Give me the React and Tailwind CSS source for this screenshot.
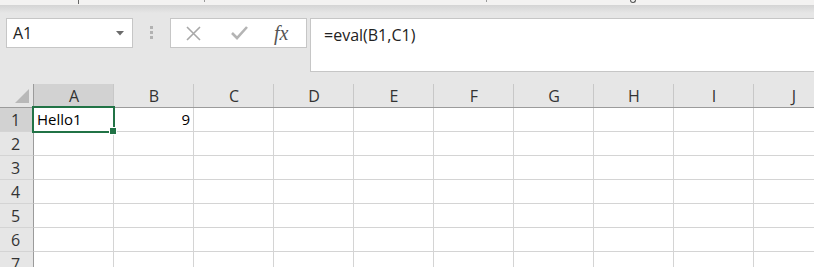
import React from "react";

const cols = ["A", "B", "C", "D", "E", "F", "G", "H", "I", "J"];
const rows = [1, 2, 3, 4, 5, 6, 7];

function Cell({ r, c }) {
  const isA1 = r === 1 && c === "A";
  return (
    <div className="relative h-[24px] border-b border-r border-[#d4d4d4] bg-white">
      {isA1 && (
        <>
          <div className="absolute left-[3px] top-0 h-[23px] flex items-center text-[15px] text-black">Hello1</div>
          <div className="absolute -left-[2px] -top-[2px] w-[83px] h-[27px] border-2 border-[#217346] z-10">
            <div className="absolute -right-[4px] -bottom-[4px] w-[6px] h-[6px] bg-[#217346] border border-white box-content"></div>
          </div>
        </>
      )}
      {r === 1 && c === "B" && (
        <div className="absolute right-[3px] top-0 h-[23px] flex items-center text-[15px] text-black">9</div>
      )}
    </div>
  );
}

export default function App() {
  return (
    <div className="w-[814px] h-[267px] overflow-hidden bg-[#e6e6e6] relative font-['Open_Sans',sans-serif]">
      {/* top strip */}
      <div className="relative h-[5px] bg-[#f3f2f1]">
        <div className="absolute left-[78px] top-0 w-px h-[4px] bg-[#666]"></div>
        <div className="absolute left-[204px] top-0 w-px h-[2px] bg-[#999]"></div>
        <div className="absolute left-[486px] top-0 w-px h-[2px] bg-[#999]"></div>
        <div className="absolute left-[630px] top-0 w-[6px] h-[3px] border-b border-r border-l border-[#555] rounded-b-[3px]"></div>
      </div>
      <div className="h-[8px] bg-gradient-to-b from-[#d4d4d4] to-[#e6e6e6]"></div>

      {/* toolbar */}
      <div className="mt-[5px] flex items-start h-[54px]">
        <div className="ml-[6px] w-[127px] h-[30px] border border-[#c6c6c6] bg-white flex items-center justify-between pl-[6px] pr-[8px]">
          <span className="text-[16px] text-[#222]">A1</span>
          <svg width="8" height="5" viewBox="0 0 8 5"><path d="M0 0 H8 L4 4.5 Z" fill="#6b6b6b" /></svg>
        </div>
        <div className="ml-[17px] mt-[8px] flex flex-col gap-[2px]">
          <div className="w-[3px] h-[3px] bg-[#b2b2b2]"></div>
          <div className="w-[3px] h-[3px] bg-[#b2b2b2]"></div>
          <div className="w-[3px] h-[3px] bg-[#b2b2b2]"></div>
        </div>
        <div className="ml-[17px] w-[137px] h-[30px] border border-[#c6c6c6] bg-white flex items-center">
          <svg className="ml-[15px]" width="15" height="15" viewBox="0 0 15 15">
            <path d="M1 1 L14 14 M14 1 L1 14" stroke="#a8a8a8" strokeWidth="1.6" fill="none" />
          </svg>
          <svg className="ml-[30px]" width="17" height="14" viewBox="0 0 17 14">
            <path d="M1 7 L6 12 L16 1" stroke="#b4b4b4" strokeWidth="2.6" fill="none" />
          </svg>
          <span className="ml-[26px] font-['Liberation_Serif',serif] italic text-[20px] text-[#555] leading-none">fx</span>
        </div>
        <div className="ml-[3px] flex-1 h-[54px] border border-r-0 border-[#c6c6c6] bg-white pl-[13px] pt-[4px]">
          <span className="text-[16px] text-[#222]">=eval(B1,C1)</span>
        </div>
      </div>

      {/* grid */}
      <div className="mt-[12px] grid grid-cols-[34px_repeat(10,80px)]">
        {/* header row */}
        <div className="relative h-[24px] border-b border-r border-[#9b9b9b]">
          <svg className="absolute left-[15px] top-[5px]" width="14" height="14" viewBox="0 0 14 14">
            <path d="M14 0 V14 H0 Z" fill="#b8b8b8" />
          </svg>
        </div>
        {cols.map((c) => (
          <div
            key={c}
            className={`h-[24px] border-b border-[#9b9b9b] flex items-center justify-center text-[16px] text-[#333] relative ${
              c === "A" ? "bg-[#d2d2d2]" : ""
            }`}
          >
            {c}
            <div className="absolute right-0 top-0 bottom-0 w-px bg-[#c8c8c8]"></div>
          </div>
        ))}
        {rows.map((r) => (
          <React.Fragment key={r}>
            <div
              className={`h-[24px] border-b border-b-[#d4d4d4] border-r border-r-[#9b9b9b] flex items-center justify-center text-[16px] text-[#333] pr-[2px] ${
                r === 1 ? "bg-[#d2d2d2]" : ""
              }`}
            >
              {r}
            </div>
            {cols.map((c) => (
              <Cell key={c} r={r} c={c} />
            ))}
          </React.Fragment>
        ))}
      </div>
    </div>
  );
}
